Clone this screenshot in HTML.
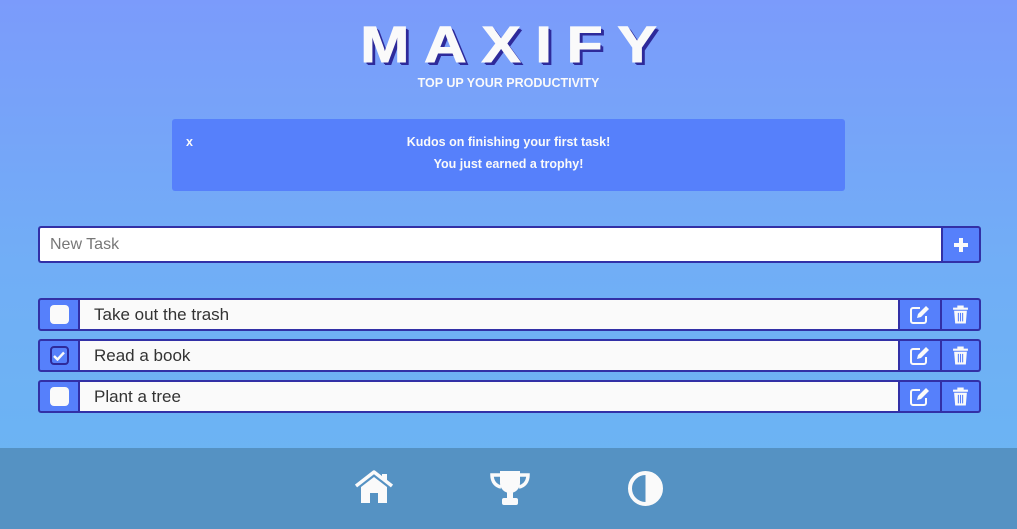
<!DOCTYPE html>
<html><head><meta charset="utf-8"><style>
*{box-sizing:border-box;margin:0;padding:0}
body{width:1017px;height:529px;overflow:hidden;font-family:"Liberation Sans",sans-serif;background:linear-gradient(180deg,#7b9bfb 0%,#71aef6 50%,#69b6f2 100%);position:relative}
.title{position:absolute;left:0;width:1017px;top:15px;text-align:center;font-size:51px;font-weight:900;color:#fafafa;letter-spacing:13px;padding-left:13px;text-shadow:2px 2px 0 #2e2a9a,3px 3px 0 #2e2a9a;line-height:60px;transform:scaleX(1.15);-webkit-text-stroke:1px #fafafa}
.sub{position:absolute;left:0;width:1017px;top:76px;text-align:center;font-size:12.5px;font-weight:bold;color:#fafafa}
.alert{position:absolute;left:172px;top:119px;width:673px;height:72px;background:#5680fb;border-radius:3px;color:#fafafa;font-size:12.5px;font-weight:bold}
.alert .x{position:absolute;left:14px;top:16px}
.alert .m{position:absolute;left:0;width:673px;text-align:center;top:12px;line-height:22px}
.row{position:absolute;left:38px;width:943px;height:33px;display:flex}
.cell{height:100%;border:2px solid #3230a6;background:#5680fb;display:flex;align-items:center;justify-content:center}
.txt{background:#fafafa;flex:1;justify-content:flex-start;padding-left:14px;font-size:17px;color:#333;border-left:none;border-right:none}
.cb{width:42px;border-radius:3px 0 0 3px}
.box{width:19px;height:19px;background:#fafafa;border-radius:4px}
.ed{width:44px}
.tr{width:39px;border-radius:0 3px 3px 0;border-left:none}
.input{position:absolute;left:38px;top:226px;width:943px;height:37px;display:flex}
.input .in{flex:1;background:#fff;border:2px solid #3230a6;border-right:none;border-radius:3px 0 0 3px;font-size:16px;color:#777;padding-left:10px;display:flex;align-items:center}
.input .b{width:40px;background:#5680fb;border:2px solid #3230a6;border-radius:0 3px 3px 0;display:flex;align-items:center;justify-content:center}
.foot{position:absolute;left:0;top:448px;width:1017px;height:81px;background:#5592c3}
.foot svg{position:absolute}
</style></head><body>
<div class="title">MAXIFY</div>
<div class="sub">TOP UP YOUR PRODUCTIVITY</div>
<div class="alert"><span class="x">x</span><div class="m">Kudos on finishing your first task!<br>You just earned a trophy!</div></div>
<div class="input"><div class="in">New Task</div><div class="b"><svg width="16" height="16" viewBox="0 0 16 16"><path d="M6 1h4v5h5v4h-5v5H6v-5H1V6h5z" fill="#fafafa"/></svg></div></div>

<div class="row" style="top:298px"><div class="cell cb"><div class="box"></div></div><div class="cell txt">Take out the trash</div><div class="cell ed"><svg width="22" height="20" viewBox="0 0 22 20"><path d="M11 3H4a2 2 0 0 0-2 2v11a2 2 0 0 0 2 2h11a2 2 0 0 0 2-2v-5" fill="none" stroke="#fafafa" stroke-width="2"/><path d="M17 1l3 3-8 8-4 1 1-4z" fill="#fafafa"/></svg></div><div class="cell tr"><svg width="17" height="21" viewBox="0 0 16 19"><path d="M5 1h6v2h4v2H1V3h4z" fill="#fafafa"/><path d="M2 6h12l-1 12H3z" fill="#fafafa"/><path d="M6 8v8M8 8v8M10 8v8" stroke="#5680fb" stroke-width="1"/></svg></div></div>

<div class="row" style="top:339px"><div class="cell cb"><div class="box" style="background:#5680fb;border:2px solid #2e2a9a;display:flex;align-items:center;justify-content:center"><svg width="12" height="10" viewBox="0 0 12 10"><path d="M1 5l3.5 3.5L11 1.5" fill="none" stroke="#fafafa" stroke-width="2.4"/></svg></div></div><div class="cell txt">Read a book</div><div class="cell ed"><svg width="22" height="20" viewBox="0 0 22 20"><path d="M11 3H4a2 2 0 0 0-2 2v11a2 2 0 0 0 2 2h11a2 2 0 0 0 2-2v-5" fill="none" stroke="#fafafa" stroke-width="2"/><path d="M17 1l3 3-8 8-4 1 1-4z" fill="#fafafa"/></svg></div><div class="cell tr"><svg width="17" height="21" viewBox="0 0 16 19"><path d="M5 1h6v2h4v2H1V3h4z" fill="#fafafa"/><path d="M2 6h12l-1 12H3z" fill="#fafafa"/><path d="M6 8v8M8 8v8M10 8v8" stroke="#5680fb" stroke-width="1"/></svg></div></div>

<div class="row" style="top:380px"><div class="cell cb"><div class="box"></div></div><div class="cell txt">Plant a tree</div><div class="cell ed"><svg width="22" height="20" viewBox="0 0 22 20"><path d="M11 3H4a2 2 0 0 0-2 2v11a2 2 0 0 0 2 2h11a2 2 0 0 0 2-2v-5" fill="none" stroke="#fafafa" stroke-width="2"/><path d="M17 1l3 3-8 8-4 1 1-4z" fill="#fafafa"/></svg></div><div class="cell tr"><svg width="17" height="21" viewBox="0 0 16 19"><path d="M5 1h6v2h4v2H1V3h4z" fill="#fafafa"/><path d="M2 6h12l-1 12H3z" fill="#fafafa"/><path d="M6 8v8M8 8v8M10 8v8" stroke="#5680fb" stroke-width="1"/></svg></div></div>

<div class="foot">
<svg style="left:354px;top:22px" width="40" height="34" viewBox="0 0 40 34"><path d="M2 16L20 2l18 14" fill="none" stroke="#fafafa" stroke-width="3.5" stroke-linejoin="round"/><path d="M28 4h5v8l-5-4z" fill="#fafafa"/><path d="M7 17L20 7l13 10v16H24V23h-8v10H7z" fill="#fafafa"/></svg>
<svg style="left:489px;top:22px" width="42" height="36" viewBox="0 0 42 36"><path d="M11 1h20v12a10 10 0 0 1-20 0z" fill="#fafafa"/><path d="M11 5H3c0 7 4 11 9 12M31 5h8c0 7-4 11-9 12" fill="none" stroke="#fafafa" stroke-width="3.5"/><path d="M18 22h6v6h-6z" fill="#fafafa"/><rect x="13" y="28" width="16" height="7" rx="2" fill="#fafafa"/></svg>
<svg style="left:627px;top:22px" width="37" height="37" viewBox="0 0 37 37"><circle cx="18.5" cy="18.5" r="15.5" fill="none" stroke="#fafafa" stroke-width="4"/><path d="M18.5 3a15.5 15.5 0 0 1 0 31z" fill="#fafafa"/></svg>
</div>
</body></html>
